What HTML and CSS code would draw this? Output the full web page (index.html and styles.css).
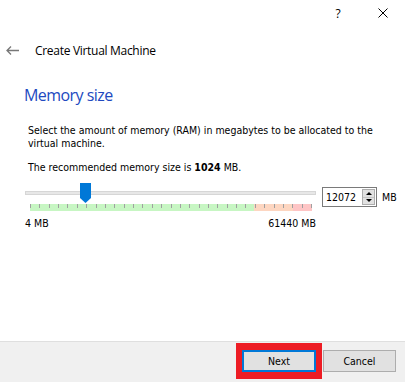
FILE: index.html
```html
<!DOCTYPE html>
<html>
<head>
<meta charset="utf-8">
<title>Create Virtual Machine</title>
<link rel="stylesheet" href="styles.css">
</head>
<body>
<div class="window">
  <div class="titlebar">
    <span class="tb-btn help">?</span>
    <span class="tb-btn close"><svg width="10" height="10" viewBox="0 0 10 10"><path d="M0.5 0.5 L9.5 9.5 M9.5 0.5 L0.5 9.5" stroke="#000" stroke-width="1" fill="none"/></svg></span>
  </div>
  <div class="header">
    <svg class="back" width="13" height="9" viewBox="0 0 13 9"><path d="M1 4.5 H13 M5 0.5 L1 4.5 L5 8.5" fill="none" stroke="#777" stroke-width="1.3"/></svg>
    <span class="header-title">Create Virtual Machine</span>
  </div>
  <div class="content">
    <h1 class="page-title">Memory size</h1>
    <p class="text desc">Select the amount of memory (RAM) in megabytes to be allocated to the virtual machine.</p>
    <p class="text rec">The recommended memory size is <b>1024</b> MB.</p>
    <div class="slider-row">
      <div class="slider">
        <div class="track"></div>
        <svg class="handle" width="11" height="20" viewBox="0 0 11 20"><path d="M0 0 H11 V15 L5.5 20 L0 15 Z" fill="#0078d7"/></svg>
        <div class="ticks"></div>
      </div>
      <div class="spinbox">
        <span class="spin-value">12072</span>
        <span class="spin-buttons"><span class="spin-up"></span><span class="spin-down"></span></span>
      </div>
      <span class="text unit">MB</span>
    </div>
    <div class="text scale"><span>4 MB</span><span>61440 MB</span></div>
  </div>
  <div class="spacer"></div>
  <div class="footer">
    <div class="highlight"><button class="btn btn-default">Next</button></div>
    <button class="btn btn-cancel">Cancel</button>
  </div>
</div>
</body>
</html>
```

FILE: styles.css
```css
html, body {
  margin: 0;
  padding: 0;
  background: #fff;
}

.window {
  width: 405px;
  height: 382px;
  display: flex;
  flex-direction: column;
  font-family: "DejaVu Sans Condensed", "DejaVu Sans", sans-serif;
  font-size: 10.5px;
  color: #000;
  overflow: hidden;
  background: #fff;
}

.titlebar {
  flex: none;
  height: 26px;
  display: flex;
  justify-content: flex-end;
}

.tb-btn {
  height: 26px;
  display: flex;
  align-items: center;
  justify-content: center;
}

.help {
  width: 46px;
  font-family: "Open Sans", sans-serif;
  font-size: 12px;
}

.close {
  width: 44px;
}

.header {
  flex: none;
  height: 29px;
  margin-top: 10px;
  padding-left: 6px;
  display: flex;
  align-items: center;
}

.header-title {
  margin-left: 16px;
  font-family: "Open Sans", sans-serif;
  font-size: 12px;
  letter-spacing: -0.3px;
}

.content {
  flex: none;
  padding: 0 0 0 24px;
}

.page-title {
  margin: 19px 0 0;
  font-family: "Open Sans", sans-serif;
  font-weight: normal;
  font-size: 16px;
  line-height: 22px;
  letter-spacing: -0.55px;
  color: #2149c0;
}

.text {
  line-height: 13px;
}

.desc {
  margin: 18px 0 0 4px;
  width: 360px;
}

.rec {
  margin: 11px 0 0 4px;
}

.slider-row {
  display: flex;
  align-items: flex-start;
  margin: 9px 0 0 1px;
}

.slider {
  flex: none;
  position: relative;
  width: 291px;
  height: 28px;
}

.track {
  margin-top: 8px;
  height: 2px;
  border: 1px solid #d6d6d6;
  background: #e7e7e7;
}

.handle {
  position: absolute;
  left: 55px;
  top: 0;
}

.ticks {
  margin: 9px 0 0 5px;
  width: 282px;
  height: 7px;
  background:
    repeating-linear-gradient(to right, #a0a0a0 0 1px, transparent 1px 9.367px) top left / 100% 4px no-repeat,
    linear-gradient(to right, #c7f6c3 0 224px, #fdd6c1 224px 263px, #fec5c5 263px);
}

.spinbox {
  flex: none;
  margin: 4px 0 0 6px;
  width: 53px;
  height: 18px;
  border: 1px solid #7a7a7a;
  display: flex;
  align-items: center;
}

.spin-value {
  flex: 1;
  padding-left: 3px;
  line-height: 13px;
}

.spin-buttons {
  flex: none;
  width: 11px;
  height: 14px;
  margin-right: 1px;
  border: 1px solid #adadad;
  display: flex;
  flex-direction: column;
  background: #e1e1e1;
}

.spin-up,
.spin-down {
  flex: 1;
  display: flex;
  align-items: center;
  justify-content: center;
}

.spin-up {
  border-bottom: 1px solid #c4c4c4;
}

.spin-up::before {
  content: "";
  border-left: 3px solid transparent;
  border-right: 3px solid transparent;
  border-bottom: 3px solid #000;
}

.spin-down::before {
  content: "";
  border-left: 3px solid transparent;
  border-right: 3px solid transparent;
  border-top: 3px solid #000;
}

.unit {
  flex: none;
  margin: 4px 0 0 5px;
  line-height: 20px;
}

.scale {
  display: flex;
  justify-content: space-between;
  width: 291px;
  margin: 6px 0 0 1px;
}

.spacer {
  flex: 1;
}

.footer {
  flex: none;
  box-sizing: border-box;
  height: 41px;
  border-top: 1px solid #dfdfdf;
  background: #f0f0f0;
  display: flex;
  justify-content: flex-end;
  align-items: flex-start;
  padding: 1px 9px 0 0;
}

.highlight {
  display: flex;
  border-style: solid;
  border-color: #ed1c24;
  border-width: 7px 6px;
}

.btn {
  box-sizing: border-box;
  width: 74px;
  height: 22px;
  margin: 0;
  padding: 0;
  font-family: "DejaVu Sans Condensed", "DejaVu Sans", sans-serif;
  font-size: 10.5px;
  color: #000;
  background: #e1e1e1;
  border: 1px solid #adadad;
}

.btn-default {
  border: 2px solid #0078d7;
}

.btn-cancel {
  width: 73px;
  margin: 7px 0 0 1px;
}
```
